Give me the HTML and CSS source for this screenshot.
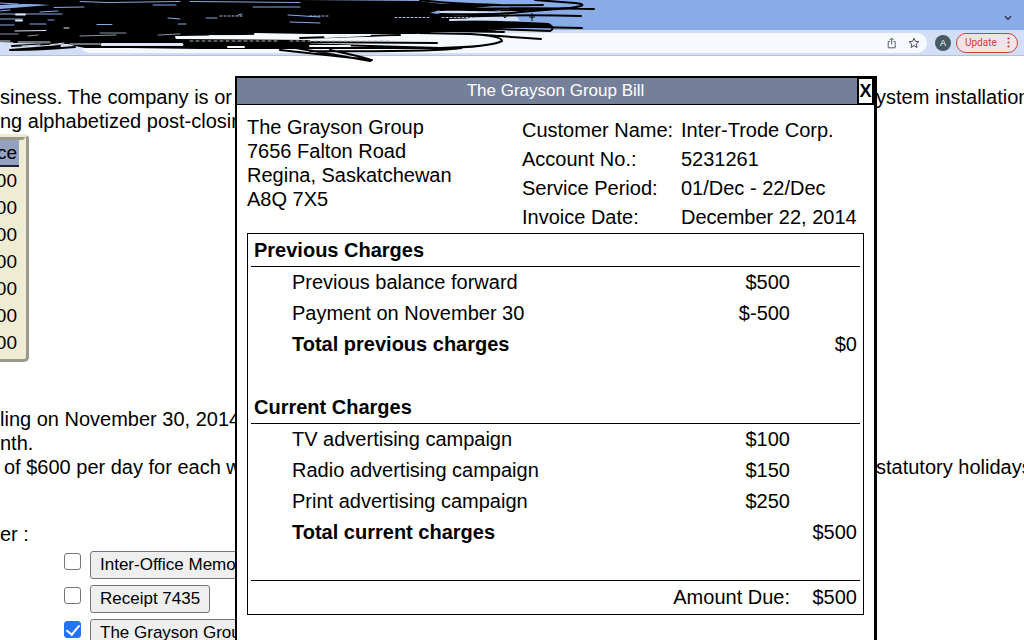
FILE: index.html
```html
<!DOCTYPE html>
<html lang="en">
<head>
    <meta charset="utf-8">
    <meta name="viewport" content="width=device-width, initial-scale=1">
    <title>The Grayson Group Bill</title>
    <link rel="stylesheet" href="styles.css">
</head>
<body>

    <header class="browser">
        <div class="tabs">
            <button type="button" class="icon" aria-label="Tabs">
                <svg width="8" height="6" viewBox="0 0 8 6"><path d="M1 1.2l3 3 3-3" fill="none" stroke="#27364f" stroke-width="1.4"/></svg>
            </button>
        </div>
        <div class="toolbar">
            <div class="address-bar">
                <button type="button" class="icon" aria-label="Share">
                    <svg width="10" height="12" viewBox="0 0 10 12"><path d="M3 4.5H1.2v6.3h7V4.5H6.500M4.700 7.500V1.200M2.700 3.100l2-2 2 2" fill="none" stroke="#5b6067"/></svg>
                </button>
                <button type="button" class="icon" aria-label="Bookmark">
                    <svg width="12" height="12" viewBox="0 0 12 12"><path d="M6 1.200l1.400 3.200 3.500.3-2.700 2.300.8 3.500L6 8.600l-3 1.900.8-3.500L1.100 4.700l3.500-.3z" fill="none" stroke="#4b4f55"/></svg>
                </button>
            </div>
            <span class="avatar">A</span>
            <button type="button" class="update">Update
                <svg width="3" height="11" viewBox="0 0 3 11" fill="#c5443c"><circle cx="1.5" cy="1.5" r="1.1"/><circle cx="1.5" cy="5.5" r="1.1"/><circle cx="1.5" cy="9.5" r="1.1"/></svg>
            </button>
        </div>

        <!-- marker over the tabs and the address -->
        <svg class="scribble" width="600" height="64" viewBox="0 0 600 64" fill="none" stroke="#000" stroke-linecap="round">
            <path d="M440 10h72l8 11h-80z" fill="#d2def5" stroke="none"/>
            <path d="M0 0L80 0 300 0 420 1 440 4 500 5 475 8 440 10 430 13 450 15 480 16 460 20 500 21 548 23 552 28 480 28 505 32 400 32 430 34 310 34 180 36 175 39 310 40 310 49 200 49 130 48 85 48 75 46 68 44 0 42z" fill="#000" stroke="none"/>
            <g stroke-width="2">
                <path d="M420 4Q470 6 543 5M440 10Q520 7 594 9M410 7Q480 13 570 8Q592 5 575 3L535 0M420 0Q440 3 500 5"/>
                <path d="M430 18Q510 14 581 16M440 14Q500 15 520 12L570 8M450 23L548 24Q556 28 550 31L470 28M440 25L582 28"/>
                <path d="M400 30L504 32M420 33L470 34L541 39M470 34Q502 36 502 41Q490 47 440 48L300 44M300 38L400 35"/>
                <path d="M300 42L437 43M310 51Q430 52 462 48L300 48M290 47L370 61Q378 60 330 50M280 50L372 60"/>
                <path d="M10 50L60 46M12 46L65 43M12 50Q40 50 75 47M14 42L120 43M300 33L430 32"/>
            </g>
            <g stroke="#86aae4" stroke-width="1">
                <path d="M80 1.500L108 2.500M108 2.500L180 1.500M190 1.500L300 2.500M0 3L18 4M54 7.500L84 7M0 11L10 10M40 12L58 11M30 24L46 24M153 5L176 5M253 7L300 7M168 18L180 19M206 18L217 18M238 15L242 14M97 24.500L112 24.500M288 15L320 17M290 22L320 23M178 24L186 24"/>
                <path d="M0 5Q25 3 50 5L0 9z" fill="#86aae4" stroke="none"/>
                <path d="M0 14L62 14M0 19L22 19M0 25L14 25M48 20L54 20"/>
                <path d="M520 19L548 18M488 12L500 11"/>
            </g>
            <g stroke="#dce6f7" stroke-width="1">
                <path d="M16 14.500H25M16 20.500H22" stroke-width="2"/>
                <path d="M15 31L46 30.500M64 28H69"/>
                <path d="M80 36L116 35M0 34L18 34M158 35L180 34M28 36L38 35M100 33H126" stroke="#8d95a5"/>
                <path d="M0 41L10 41M18 42L50 42M50 45L64 43M22 46L40 45M70 44L100 44"/>
                <path d="M102 44.500H182" stroke-dasharray="2 1 1 1 3 1" stroke-width="3"/>
                <path d="M395 17.500H430M442 17.500H482M310 16H330M220 16H242" stroke="#a9bbdc" stroke-dasharray="2 2"/>
                <path d="M460 12H476M450 20L490 19" stroke-width="2"/>
            </g>
            <g stroke="#f6f9fe" stroke-width="2">
                <path d="M176 37L260 36M210 36L260 37M255 34L310 35M228 47H244M325 37L370 35M340 39L400 37M310 46H350"/>
                <path d="M190 41H280M290 41H390" stroke-width="1" stroke="#aeb3bd" stroke-dasharray="3 3"/>
            </g>
            <path d="M532 13V21M529 17H535M502 14L505 18 508 14" stroke-width="1" stroke-linecap="butt"/>
        </svg>
    </header>

    <main class="page">
        <div class="text-line">
            <p>siness. The company is or<br>ng alphabetized post-closin</p>
            <p>ystem installation</p>
        </div>

        <table class="balance">
            <tr><th>ce</th></tr>
            <tr><td>00</td></tr>
            <tr><td>00</td></tr>
            <tr><td>00</td></tr>
            <tr><td>00</td></tr>
            <tr><td>00</td></tr>
            <tr><td>00</td></tr>
            <tr><td>00</td></tr>
        </table>

        <p>ling on November 30, 2014<br>nth.</p>
        <div class="text-line">
            <p class="rate">of $600 per day for each w</p>
            <p>statutory holidays</p>
        </div>

        <p class="documents-title">er :</p>
        <div class="documents">
            <div class="document">
                <input type="checkbox" aria-labelledby="memo">
                <button type="button" id="memo">Inter-Office Memo</button>
            </div>
            <div class="document">
                <input type="checkbox" aria-labelledby="receipt">
                <button type="button" id="receipt">Receipt 7435</button>
            </div>
            <div class="document">
                <input type="checkbox" aria-labelledby="bill" checked>
                <button type="button" id="bill">The Grayson Group</button>
            </div>
        </div>
    </main>

    <section class="popup">
        <div class="popup-title">
            <h1>The Grayson Group Bill</h1>
            <button type="button" class="close">X</button>
        </div>
        <div class="popup-body">
            <div class="bill-head">
                <address>The Grayson Group<br>7656 Falton Road<br>Regina, Saskatchewan<br>A8Q 7X5</address>
                <table class="customer">
                    <tr><th>Customer Name:</th><td>Inter-Trode Corp.</td></tr>
                    <tr><th>Account No.:</th><td>5231261</td></tr>
                    <tr><th>Service Period:</th><td>01/Dec - 22/Dec</td></tr>
                    <tr><th>Invoice Date:</th><td>December 22, 2014</td></tr>
                </table>
            </div>
            <div class="charges-box">
                <table class="charges">
                    <tr class="section"><th colspan="3">Previous Charges</th></tr>
                    <tr><td>Previous balance forward</td><td>$500</td><td></td></tr>
                    <tr><td>Payment on November 30</td><td>$-500</td><td></td></tr>
                    <tr><th>Total previous charges</th><td></td><td>$0</td></tr>
                    <tr class="space"><td colspan="3"></td></tr>
                    <tr class="section"><th colspan="3">Current Charges</th></tr>
                    <tr><td>TV advertising campaign</td><td>$100</td><td></td></tr>
                    <tr><td>Radio advertising campaign</td><td>$150</td><td></td></tr>
                    <tr><td>Print advertising campaign</td><td>$250</td><td></td></tr>
                    <tr><th>Total current charges</th><td></td><td>$500</td></tr>
                    <tr class="space last"><td colspan="3"></td></tr>
                    <tr class="due"><td colspan="2">Amount Due:</td><td>$500</td></tr>
                </table>
            </div>
        </div>
    </section>

</body>
</html>
```
FILE: styles.css
```css
* {
    box-sizing: border-box;
}
body {
    margin: 0;
    height: 100vh;
    overflow: hidden;
    background: #fff;
    color: #000;
    font: 20px/24px "Liberation Sans", Arial, sans-serif;
}
p, h1 {
    margin: 0;
}
table {
    border-collapse: collapse;
}
td, th {
    padding: 0;
    text-align: left;
}
th {
    font-weight: bold;
}

/* browser bar */
.browser {
    position: relative;
}
.tabs {
    display: flex;
    justify-content: flex-end;
    align-items: center;
    height: 30px;
    padding: 6px 12px 0 0;
    background: #8aace6;
}
.icon {
    display: flex;
    padding: 0;
    border: 0;
    background: none;
}
.toolbar {
    display: flex;
    align-items: center;
    height: 26px;
    padding: 0 6px 0 80px;
    border-bottom: 1px solid #b4c0da;
    background: #d2def5;
}
.address-bar {
    display: flex;
    flex: 1;
    justify-content: flex-end;
    align-items: center;
    gap: 11px;
    height: 20px;
    padding-right: 7px;
    border-radius: 10px;
    background: #f6f9fe;
}
.avatar {
    width: 16px;
    height: 16px;
    margin: 0 5px 0 8px;
    border-radius: 50%;
    background: #465a64;
    color: #fff;
    font-size: 9px;
    line-height: 16px;
    text-align: center;
}
.update {
    display: flex;
    justify-content: space-between;
    align-items: center;
    width: 62px;
    height: 20px;
    padding: 0 7px 0 8px;
    border: 1px solid #c5443c;
    border-radius: 10px;
    background: #f1e3e8;
    color: #c5443c;
    font: 10px Roboto, sans-serif;
}
.scribble {
    position: absolute;
    top: 0;
    left: 0;
}

/* page behind the popup */
.page {
    padding-top: 29px;
    white-space: nowrap;
}
.text-line {
    display: grid;
    grid-template-columns: 1fr 148px;
}
.rate {
    padding-left: 4px;
}
.balance {
    width: 29px;
    margin: 1px 0 45px;
    border: 6px ridge #efecd4;
    border-left: 0;
    border-radius: 0 5px 5px 0;
    border-collapse: separate;
    border-spacing: 0;
    background: #efecd4;
}
.balance th, .balance td {
    display: flex;
    justify-content: flex-end;
    align-items: center;
    width: 19px;
    height: 27px;
    padding-right: 2px;
    font-size: 19px;
    font-weight: normal;
}
.balance th {
    border-bottom: 2px solid #1c2338;
    background: #94a1c0;
}
.documents-title {
    padding-top: 43px;
}
.documents {
    display: flex;
    flex-direction: column;
    gap: 6px;
    padding: 5px 0 0 64px;
}
.document {
    display: flex;
    align-items: flex-start;
    gap: 9px;
}
.document input {
    appearance: none;
    width: 17px;
    height: 17px;
    margin: 2px 0 0;
    border: 1px solid #767676;
    border-radius: 3px;
    background: #fff;
}
.document input:checked {
    border-color: #2374f4;
    background: #2374f4;
}
.document input:checked::after {
    content: "";
    display: block;
    width: 6px;
    height: 11px;
    margin: 0 auto;
    border: solid #fff;
    border-width: 0 2px 2px 0;
    transform: rotate(40deg);
}
.document button {
    height: 28px;
    padding: 0 9px;
    border: 1px solid #767676;
    border-radius: 3px;
    background: #efefef;
    color: #000;
    font: 17px "Liberation Sans", Arial, sans-serif;
}

/* bill popup */
.popup {
    position: absolute;
    top: 76px;
    left: 235px;
    width: 642px;
    min-height: 580px;
    border: 2px solid #000;
    border-right-width: 3px;
    background: #fff;
}
.popup-title {
    display: flex;
    align-items: center;
    height: 27px;
    border-bottom: 1px solid #000;
    background: #74809a;
}
.popup-title h1 {
    flex: 1;
    padding-left: 17px;
    color: #fff;
    font-size: 17px;
    font-weight: normal;
    text-align: center;
}
.close {
    width: 17px;
    height: 26px;
    padding: 0;
    border: 2px solid #000;
    border-width: 1px 2px;
    background: #fff;
    color: #000;
    font: bold 18px "Liberation Sans", Arial, sans-serif;
}
.popup-body {
    padding: 10px 10px 0;
}
.bill-head {
    display: flex;
    justify-content: space-between;
    margin-bottom: 2px;
}
address {
    font-style: normal;
}
.customer {
    width: 342px;
}
.customer th {
    width: 159px;
    font-weight: normal;
}
.customer th, .customer td {
    height: 29px;
}
.charges-box {
    padding: 1px 3px;
    border: 1px solid #000;
}
.charges {
    width: 100%;
}
.charges td, .charges th {
    height: 31px;
    padding: 0 3px 0 41px;
}
.charges td + td, .charges th + td {
    width: 70px;
    padding-left: 0;
    text-align: right;
}
.charges td + td + td, .charges th + td + td, .charges .due td + td {
    width: 67px;
}
.charges .section th {
    padding-left: 3px;
    border-bottom: 1px solid #000;
}
.charges .space td {
    height: 33px;
}
.charges .last td {
    border-bottom: 1px solid #000;
}
.charges .due td {
    height: 33px;
    text-align: right;
}
```
